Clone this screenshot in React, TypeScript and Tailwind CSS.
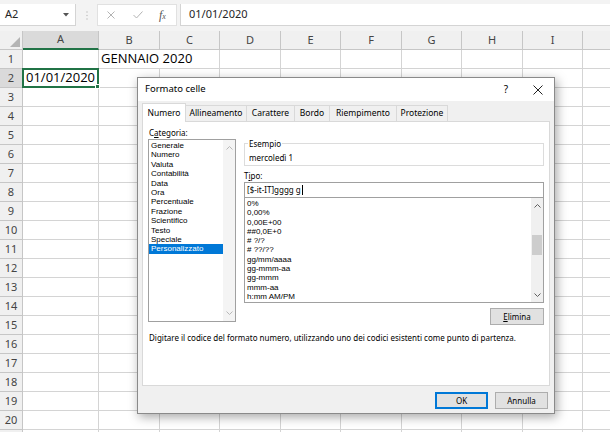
import React from 'react';

const cols = [
  { l: 'A', w: 'w-[76px]' },
  { l: 'B', w: 'w-[61px]' },
  { l: 'C', w: 'w-[60px]' },
  { l: 'D', w: 'w-[61px]' },
  { l: 'E', w: 'w-[60px]' },
  { l: 'F', w: 'w-[61px]' },
  { l: 'G', w: 'w-[60px]' },
  { l: 'H', w: 'w-[61px]' },
  { l: 'I', w: 'w-[60px]' },
  { l: '', w: 'w-[60px]' },
];

const rows = Array.from({ length: 21 }, (_, i) => i + 1);

const categories = [
  'Generale',
  'Numero',
  'Valuta',
  'Contabilità',
  'Data',
  'Ora',
  'Percentuale',
  'Frazione',
  'Scientifico',
  'Testo',
  'Speciale',
  'Personalizzato',
];

const formats = [
  '0%',
  '0,00%',
  '0,00E+00',
  '##0,0E+0',
  '# ?/?',
  '# ??/??',
  'gg/mm/aaaa',
  'gg-mmm-aa',
  'gg-mmm',
  'mmm-aa',
  'h:mm AM/PM',
];

const tabs = [
  { label: 'Numero', w: 'w-[44px]', active: true },
  { label: 'Allineamento', w: 'w-[61px]' },
  { label: 'Carattere', w: 'w-[48px]' },
  { label: 'Bordo', w: 'w-[35px]' },
  { label: 'Riempimento', w: 'w-[67px]' },
  { label: 'Protezione', w: 'w-[51px]' },
];

function Arrow({ up, color }: { up?: boolean; color: string }) {
  return (
    <svg width="7" height="4" viewBox="0 0 7 4">
      <polyline
        points={up ? '0.5,3.5 3.5,0.5 6.5,3.5' : '0.5,0.5 3.5,3.5 6.5,0.5'}
        fill="none"
        stroke={color}
        strokeWidth="1"
      />
    </svg>
  );
}

function FormulaBar() {
  return (
    <div className="h-[31px] bg-[#f3f3f3] flex items-start pt-[4px] text-[11px] text-[#262626]">
      <div className="w-[76px] h-[22px] bg-white border-r border-b border-[#d4d4d4] flex items-center pl-[5px] pr-[6px]">
        <span>A2</span>
        <svg className="ml-auto" width="6" height="4" viewBox="0 0 6 4">
          <polygon points="0,0 6,0 3,3.5" fill="#555" />
        </svg>
      </div>
      <div className="w-[21px] h-[22px] flex items-center justify-center">
        <svg width="2" height="9" viewBox="0 0 2 9">
          <circle cx="1" cy="1" r="0.8" fill="#c4c4c4" />
          <circle cx="1" cy="4.5" r="0.8" fill="#c4c4c4" />
          <circle cx="1" cy="8" r="0.8" fill="#c4c4c4" />
        </svg>
      </div>
      <div className="w-[80px] h-[22px] bg-white border border-[#e1e1e1] flex items-center pl-[9px]">
        <svg width="8" height="8" viewBox="0 0 8 8">
          <line x1="0.5" y1="0.5" x2="7.5" y2="7.5" stroke="#b3b3b3" strokeWidth="1" />
          <line x1="7.5" y1="0.5" x2="0.5" y2="7.5" stroke="#b3b3b3" strokeWidth="1" />
        </svg>
        <svg className="ml-[18px]" width="10" height="8" viewBox="0 0 10 8">
          <polyline points="0.5,4 3.5,7 9.5,0.5" fill="none" stroke="#b3b3b3" strokeWidth="1" />
        </svg>
        <span className="ml-[16px] italic text-[#555] font-['Liberation_Serif',serif] text-[12px] leading-none">
          f<span className="text-[8px]">x</span>
        </span>
      </div>
      <div className="flex-1 ml-[3px] h-[22px] bg-white border-l border-b border-[#d4d4d4] flex items-center pl-[8px]">
        01/01/2020
      </div>
    </div>
  );
}

function Sheet() {
  return (
    <div className="font-['Noto_Sans',sans-serif]">
      <div className="flex h-[19px]">
        <div className="w-[23px] shrink-0 bg-[#f0f0f0] border-r border-b border-[#c6c6c6] flex items-end justify-end pr-[2px] pb-[2px]">
          <svg width="10" height="10" viewBox="0 0 10 10">
            <polygon points="0,10 10,10 10,0" fill="#b4b4b4" />
          </svg>
        </div>
        {cols.map((c, i) => (
          <div
            key={i}
            className={`${c.w} shrink-0 border-r border-[#c6c6c6] flex items-center justify-center text-[11px] text-[#444] ${
              c.l === 'A' ? 'bg-[#dadada] border-b-2 border-b-[#217346]' : 'bg-[#f0f0f0] border-b border-b-[#c6c6c6]'
            }`}
          >
            {c.l}
          </div>
        ))}
      </div>
      {rows.map((r) => (
        <div key={r} className="flex h-[19px]">
          <div
            className={`w-[23px] shrink-0 border-r border-b border-[#c6c6c6] flex items-center justify-center text-[11px] text-[#444] ${
              r === 2 ? 'bg-[#dadada]' : 'bg-[#f0f0f0]'
            }`}
          >
            {r <= 20 ? r : ''}
          </div>
          {cols.map((c, i) => {
            const overflow = r === 1 && c.l === 'B';
            return (
              <div
                key={i}
                className={`${c.w} shrink-0 relative border-b border-[#d4d4d4] ${overflow ? '' : 'border-r'}`}
              >
                {overflow && (
                  <span className="absolute left-[2px] top-0 h-[18px] flex items-center whitespace-nowrap text-[13px] text-black font-['Open_Sans',sans-serif] z-10">
                    GENNAIO 2020
                  </span>
                )}
                {r === 2 && c.l === 'A' && (
                  <div className="absolute -left-[1px] -top-[1px] w-[77px] h-[20px] border-2 border-[#217346] flex items-center justify-end pr-[2px] text-[13px] text-black font-['Open_Sans',sans-serif] z-10">
                    01/01/2020
                    <div className="absolute -right-[3px] -bottom-[3px] w-[5px] h-[5px] bg-[#217346] border border-white" />
                  </div>
                )}
              </div>
            );
          })}
        </div>
      ))}
    </div>
  );
}

function Dialog() {
  return (
    <div className="absolute left-[137px] top-[77px] w-[418px] h-[337px] bg-[#f0f0f0] border border-[#8a8a8a] shadow-[2px_3px_10px_rgba(0,0,0,0.35)] flex flex-col font-['Noto_Sans',sans-serif] text-black z-20">
      <div className="h-[23px] shrink-0 bg-white flex items-center pl-[7px] pr-[11px]">
        <span className="text-[9.5px]">Formato celle</span>
        <span className="ml-auto text-[10px] mr-[25px]">?</span>
        <svg width="10" height="10" viewBox="0 0 10 10">
          <line x1="0.5" y1="0.5" x2="9.5" y2="9.5" stroke="#222" strokeWidth="1" />
          <line x1="9.5" y1="0.5" x2="0.5" y2="9.5" stroke="#222" strokeWidth="1" />
        </svg>
      </div>

      <div className="flex-1 flex flex-col px-[4px] pt-[2px]">
        <div className="flex items-end h-[19px] -mb-[1px] relative z-10">
          {tabs.map((t) =>
            t.active ? (
              <div
                key={t.label}
                className={`${t.w} h-[19px] bg-white border border-b-0 border-[#d9d9d9] flex items-center justify-center text-[8.5px]`}
              >
                {t.label}
              </div>
            ) : (
              <div
                key={t.label}
                className={`${t.w} h-[17px] bg-[#f0f0f0] border border-l-0 border-[#d9d9d9] flex items-center justify-center text-[8.5px]`}
              >
                {t.label}
              </div>
            )
          )}
        </div>

        <div className="h-[265px] bg-white border border-[#d9d9d9] px-[5px] pt-[4px] flex flex-col text-[8px]">
          <div className="flex gap-[8px]">
            <div className="w-[88px] flex flex-col">
              <div className="h-[13px] leading-[13px] pl-[1px]">
                C<span className="underline">a</span>tegoria:
              </div>
              <div className="h-[183px] border border-[#a0a0a0] flex">
                <div className="flex-1 pt-[1px] leading-[9.4px] font-['Liberation_Sans',sans-serif]">
                  {categories.map((c) => (
                    <div
                      key={c}
                      className={`pl-[2px] ${c === 'Personalizzato' ? 'bg-[#0078d7] text-white' : ''}`}
                    >
                      {c}
                    </div>
                  ))}
                </div>
                <div className="w-[12px] bg-[#f4f4f4] flex flex-col items-center justify-between pt-[6px] pb-[6px]">
                  <Arrow up color="#b8b8b8" />
                  <Arrow color="#b8b8b8" />
                </div>
              </div>
            </div>

            <div className="flex-1 flex flex-col mt-[17px]">
              <div className="h-[23px] border border-[#dcdcdc] relative pl-[4px] pt-[9px] leading-[10px]">
                <span className="absolute left-[3px] -top-[5px] px-[1px] bg-white leading-[10px]">Esempio</span>
                mercoledì 1
              </div>
              <div className="mt-[4px] h-[12px] leading-[12px]">
                T<span className="underline">i</span>po:
              </div>
              <div className="h-[16px] border border-[#a0a0a0] flex items-center pl-[2px]">
                [$-it-IT]gggg g
                <span className="w-[1px] h-[10px] bg-black ml-[1px]" />
              </div>
              <div className="h-[106px] -mt-[1px] border border-[#a0a0a0] flex">
                <div className="flex-1 pt-[1px] pl-[2px] leading-[9.3px] font-['Liberation_Sans',sans-serif]">
                  {formats.map((f) => (
                    <div key={f}>{f}</div>
                  ))}
                </div>
                <div className="w-[12px] bg-[#f0f0f0] flex flex-col items-center pt-[6px] pb-[5px]">
                  <Arrow up color="#606060" />
                  <div className="w-[10px] h-[20px] bg-[#cdcdcd] mt-[27px]" />
                  <div className="flex-1" />
                  <Arrow color="#606060" />
                </div>
              </div>
              <div className="mt-[5px] self-end w-[54px] h-[17px] bg-[#e1e1e1] border border-[#adadad] flex items-center justify-center">
                <span>
                  <span className="underline">E</span>limina
                </span>
              </div>
            </div>
          </div>

          <div className="mt-[7px] pl-[1px] h-[12px] leading-[12px]">
            Digitare il codice del formato numero, utilizzando uno dei codici esistenti come punto di partenza.
          </div>
        </div>

        <div className="flex justify-end gap-[7px] mt-[6px] mr-[2px] text-[8px]">
          <div className="w-[53px] h-[17px] bg-[#e1e1e1] border border-[#0078d7] shadow-[inset_0_0_0_1px_#0078d7] flex items-center justify-center">
            OK
          </div>
          <div className="w-[53px] h-[17px] bg-[#e1e1e1] border border-[#adadad] flex items-center justify-center">
            Annulla
          </div>
        </div>
      </div>
    </div>
  );
}

export default function App() {
  return (
    <div className="relative w-[610px] h-[432px] overflow-hidden bg-white font-['Noto_Sans',sans-serif]">
      <FormulaBar />
      <Sheet />
      <Dialog />
    </div>
  );
}
